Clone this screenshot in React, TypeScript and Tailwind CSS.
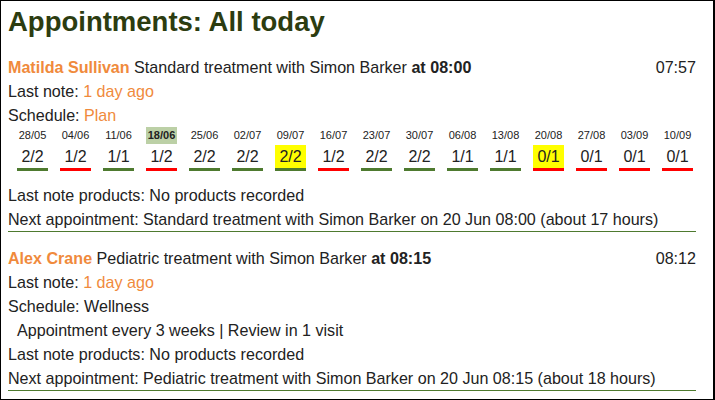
import React from "react";

type Visit = {
  date: string;
  score: string;
  ok: boolean;
  today?: boolean;
  flagged?: boolean;
};

const visits: Visit[] = [
  { date: "28/05", score: "2/2", ok: true },
  { date: "04/06", score: "1/2", ok: false },
  { date: "11/06", score: "1/1", ok: true },
  { date: "18/06", score: "1/2", ok: false, today: true },
  { date: "25/06", score: "2/2", ok: true },
  { date: "02/07", score: "2/2", ok: true },
  { date: "09/07", score: "2/2", ok: true, flagged: true },
  { date: "16/07", score: "1/2", ok: false },
  { date: "23/07", score: "2/2", ok: true },
  { date: "30/07", score: "2/2", ok: true },
  { date: "06/08", score: "1/1", ok: true },
  { date: "13/08", score: "1/1", ok: true },
  { date: "20/08", score: "0/1", ok: false, flagged: true },
  { date: "27/08", score: "0/1", ok: false },
  { date: "03/09", score: "0/1", ok: false },
  { date: "10/09", score: "0/1", ok: false },
];

function VisitColumn({ visit }: { visit: Visit }) {
  return (
    <div className="flex w-[31px] flex-col items-center">
      <div
        className={
          "h-[17px] w-full text-center text-[11px] leading-[17px] " +
          (visit.today ? "bg-[#bcd0a6] font-bold" : "")
        }
      >
        {visit.date}
      </div>
      <div
        className={
          "mt-px h-[26px] w-full border-b-[3px] text-center text-[16px] leading-[24px] " +
          (visit.ok ? "border-[#4e7a2f] " : "border-[#ff0000] ") +
          (visit.flagged ? "bg-[#ffff00]" : "")
        }
      >
        {visit.score}
      </div>
    </div>
  );
}

export default function App() {
  return (
    <div className="box-border h-[400px] w-[715px] overflow-hidden border-t border-b border-l border-r-2 border-black bg-white font-['Liberation_Sans',Arial,sans-serif] text-[16.1px] leading-[24px] text-[#222222]">
      <div className="pl-[7px] pr-[17px] pt-[5px]">
        <h1 className="text-[27.5px] font-bold leading-[31px] text-[#2c3c10]">Appointments: All today</h1>

        {/* First appointment */}
        <div className="mt-[18px] border-b border-[#4e7a2f]">
          <div className="flex justify-between">
            <div>
              <span className="font-bold text-[#f08a3c]">Matilda Sullivan</span> Standard treatment with Simon Barker{" "}
              <span className="font-bold">at 08:00</span>
            </div>
            <div>07:57</div>
          </div>
          <div>
            Last note: <span className="text-[#f08a3c]">1 day ago</span>
          </div>
          <div>
            Schedule: <span className="text-[#f08a3c]">Plan</span>
          </div>
          <div className="flex gap-[12px] pl-[9px]">
            {visits.map((v) => (
              <VisitColumn visit={v} key={v.date} />
            ))}
          </div>
          <div className="mt-[12px]">Last note products: No products recorded</div>
          <div>Next appointment: Standard treatment with Simon Barker on 20 Jun 08:00 (about 17 hours)</div>
        </div>

        {/* Second appointment */}
        <div className="mt-[14px] border-b border-[#4e7a2f]">
          <div className="flex justify-between">
            <div>
              <span className="font-bold text-[#f08a3c]">Alex Crane</span> Pediatric treatment with Simon Barker{" "}
              <span className="font-bold">at 08:15</span>
            </div>
            <div>08:12</div>
          </div>
          <div>
            Last note: <span className="text-[#f08a3c]">1 day ago</span>
          </div>
          <div>Schedule: Wellness</div>
          <div className="pl-[9px]">Appointment every 3 weeks | Review in 1 visit</div>
          <div>Last note products: No products recorded</div>
          <div>Next appointment: Pediatric treatment with Simon Barker on 20 Jun 08:15 (about 18 hours)</div>
        </div>
      </div>
    </div>
  );
}
